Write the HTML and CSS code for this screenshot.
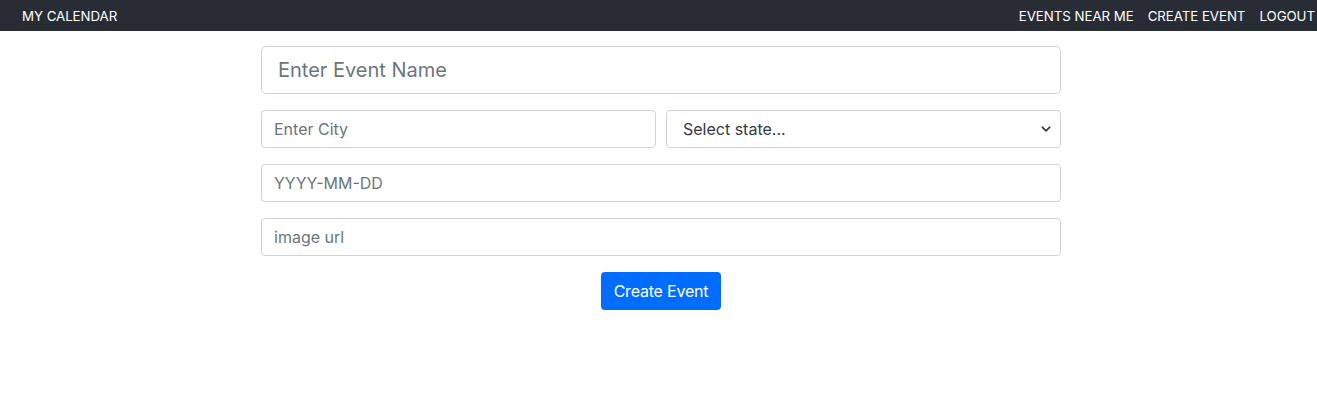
FILE: index.html
```html
<!DOCTYPE html>
<html lang="en">
<head>
<meta charset="utf-8">
<title>My Calendar</title>
<link rel="stylesheet" href="styles.css">
</head>
<body>
<nav class="navbar">
  <a class="brand" href="#">MY CALENDAR</a>
  <div class="nav-links">
    <a href="#">EVENTS NEAR ME</a>
    <a href="#">CREATE EVENT</a>
    <a href="#">LOGOUT</a>
  </div>
</nav>
<main class="container">
  <form class="event-form">
    <input class="form-control form-control-lg" type="text" placeholder="Enter Event Name">
    <div class="row">
      <input class="form-control" type="text" placeholder="Enter City">
      <select class="form-select">
        <option>Select state...</option>
      </select>
    </div>
    <input class="form-control" type="text" placeholder="YYYY-MM-DD">
    <input class="form-control" type="text" placeholder="image url">
    <div class="actions">
      <button type="button" class="btn">Create Event</button>
    </div>
  </form>
</main>
</body>
</html>
```

FILE: styles.css
```css
* { box-sizing: border-box; }
body {
  margin: 0;
  font-family: Inter, "Liberation Sans", sans-serif;
  background: #fff;
  color: #212529;
}
.navbar {
  height: 31px;
  background: #282c34;
  display: flex;
  align-items: center;
  justify-content: space-between;
  padding: 0 2px 0 22px;
}
.navbar a {
  color: #fff;
  text-decoration: none;
  font-size: 13.3px;
  letter-spacing: -0.05px;
}
.nav-links {
  display: flex;
  gap: 14px;
}
.container {
  width: 800px;
  margin: 15px auto 0 261px;
}
.event-form {
  display: flex;
  flex-direction: column;
  gap: 16px;
}
.form-control, .form-select {
  display: block;
  width: 100%;
  height: 38px;
  padding: 6px 12px;
  font-family: inherit;
  font-size: 16px;
  color: #212529;
  background: #fff;
  border: 1px solid #ced4da;
  border-radius: 4px;
  outline: none;
}
.form-control::placeholder { color: #6c757d; opacity: 1; }
.form-control-lg {
  height: 48px;
  padding: 8px 16px;
  font-size: 20px;
  border-radius: 5px;
}
.row {
  display: grid;
  grid-template-columns: 1fr 1fr;
  gap: 10px;
}
.form-select {
  appearance: none;
  padding-left: 16px;
  color: #343a40;
  background-image: url("data:image/svg+xml,%3csvg xmlns='http://www.w3.org/2000/svg' viewBox='0 0 16 16'%3e%3cpath fill='none' stroke='%23343a40' stroke-linecap='round' stroke-linejoin='round' stroke-width='2.5' d='M2 5l6 6 6-6'/%3e%3c/svg%3e");
  background-repeat: no-repeat;
  background-position: right 9px center;
  background-size: 10px 10px;
}
.actions {
  display: flex;
  justify-content: center;
}
.btn {
  width: 120px;
  height: 38px;
  background: #006dff;
  color: #fff;
  border: 0;
  border-radius: 4px;
  font-family: inherit;
  font-size: 16px;
  letter-spacing: -0.2px;
}
```
